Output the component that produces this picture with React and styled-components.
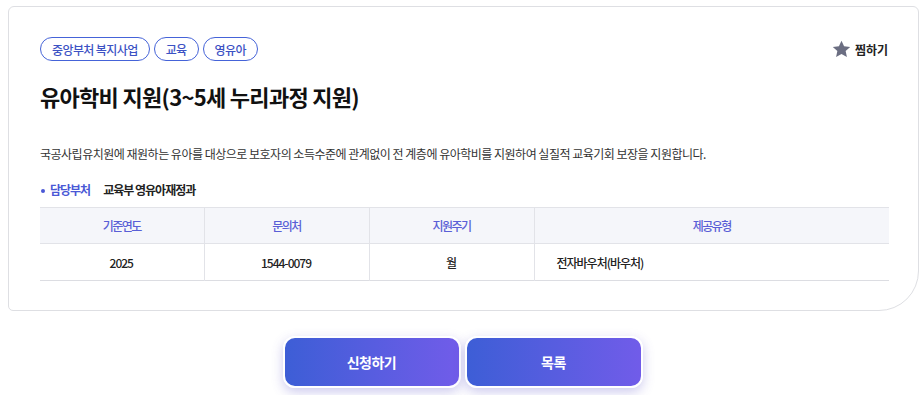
import React from 'react'
import styled, { createGlobalStyle } from 'styled-components'

const GlobalStyle = createGlobalStyle`
  * { box-sizing: border-box; }
  body {
    margin: 0;
    background: #fff;
    font-family: "Noto Sans CJK KR", "Noto Sans", sans-serif;
    color: #222;
  }
`

const tags = ['중앙부처 복지사업', '교육', '영유아']

const columns = [
  { head: '기준연도', value: '2025', width: '164px' },
  { head: '문의처', value: '1544-0079', width: '165px' },
  { head: '지원주기', value: '월', width: '165px' },
  { head: '제공유형', value: '전자바우처(바우처)', width: 'auto', left: true },
]

const StarIcon = () => (
  <svg width="19" height="18" viewBox="0 0 24 23">
    <path
      d="M12 0.8l3.3 7.1 7.8 0.9-5.8 5.3 1.6 7.7L12 17.9l-6.9 3.9 1.6-7.7L0.9 8.8l7.8-0.9z"
      fill="#6b6e82"
    />
  </svg>
)

const App = () => {
  return (
    <Page>
      <GlobalStyle />
      <Card>
        <TopRow>
          <Tags>
            {tags.map((t) => (
              <Tag key={t}>{t}</Tag>
            ))}
          </Tags>
          <Wish>
            <StarIcon />
            <span>찜하기</span>
          </Wish>
        </TopRow>
        <Title>유아학비 지원(3~5세 누리과정 지원)</Title>
        <Desc>
          국공사립유치원에 재원하는 유아를 대상으로 보호자의 소득수준에 관계없이 전 계층에 유아학비를 지원하여 실질적 교육기회 보장을 지원합니다.
        </Desc>
        <Dept>
          <DeptLabel>담당부처</DeptLabel>
          <DeptName>교육부 영유아재정과</DeptName>
        </Dept>
        <Table>
          <colgroup>
            {columns.map((c) => (
              <col key={c.head} style={{ width: c.width }} />
            ))}
          </colgroup>
          <thead>
            <tr>
              {columns.map((c) => (
                <Th key={c.head}>{c.head}</Th>
              ))}
            </tr>
          </thead>
          <tbody>
            <tr>
              {columns.map((c) => (
                <Td key={c.head} $left={c.left}>{c.value}</Td>
              ))}
            </tr>
          </tbody>
        </Table>
      </Card>
      <Buttons>
        <ActionButton>신청하기</ActionButton>
        <ActionButton>목록</ActionButton>
      </Buttons>
    </Page>
  )
}

export default App

const Page = styled.div`
  width: 924px;
  height: 395px;
  padding: 6px 5px 0 8px;
  overflow: hidden;
`

const Card = styled.div`
  border: 1px solid #dedfe3;
  border-radius: 6px 6px 40px 5px;
  padding: 30px 29px 30px 31px;
  height: 305px;
`

const TopRow = styled.div`
  display: flex;
  justify-content: space-between;
  align-items: center;
`

const Tags = styled.div`
  display: flex;
  gap: 4px;
`

const Tag = styled.span`
  height: 24px;
  padding: 0 11px;
  border: 1px solid #4563d8;
  border-radius: 12px;
  color: #3c52c4;
  font-size: 12px;
  font-weight: 500;
  letter-spacing: -0.6px;
  display: flex;
  align-items: center;
`

const Wish = styled.div`
  display: flex;
  align-items: center;
  gap: 4px;
  margin-right: 1px;
  font-size: 12px;
  font-weight: 700;
  color: #222;
`

const Title = styled.h1`
  margin: 19px 0 0;
  font-size: 22px;
  font-weight: 700;
  line-height: 32px;
  color: #111;
  letter-spacing: -0.7px;
`

const Desc = styled.p`
  margin: 32px 0 0;
  font-size: 12px;
  line-height: 20px;
  color: #333;
  letter-spacing: -0.5px;
`

const Dept = styled.div`
  margin-top: 16px;
  display: flex;
  align-items: center;
  gap: 13px;
  font-size: 12px;
  font-weight: 700;
  line-height: 20px;
`

const DeptLabel = styled.span`
  position: relative;
  padding-left: 10px;
  color: #4a58d6;
  letter-spacing: -1px;
  &::before {
    content: '';
    position: absolute;
    left: 1px;
    top: 9px;
    width: 4px;
    height: 4px;
    border-radius: 50%;
    background: #4a58d6;
  }
`

const DeptName = styled.span`
  color: #222;
  letter-spacing: -1px;
`

const Table = styled.table`
  margin-top: 7px;
  width: 100%;
  border-collapse: collapse;
  table-layout: fixed;
  border-top: 1px solid #e2e3e8;
  border-bottom: 1px solid #dcdde2;
  font-size: 12px;
`

const Th = styled.th`
  height: 36px;
  background: #f5f6fa;
  color: #5a5fd6;
  font-weight: 500;
  letter-spacing: -1.5px;
  border-left: 1px solid #e2e3e8;
  border-bottom: 1px solid #e2e3e8;
  &:first-child { border-left: none; }
`

const Td = styled.td`
  height: 37px;
  text-align: ${(p) => (p.$left ? 'left' : 'center')};
  padding-left: ${(p) => (p.$left ? '22px' : '0')};
  font-weight: 500;
  color: #222;
  letter-spacing: -1px;
  border-left: 1px solid #e2e3e8;
  &:first-child { border-left: none; }
`

const Buttons = styled.div`
  margin-top: 25px;
  display: flex;
  justify-content: center;
  gap: 4px;
  padding-right: 2px;
`

const ActionButton = styled.button`
  width: 178px;
  height: 52px;
  border: 2px solid #fff;
  border-radius: 12px;
  background: linear-gradient(90deg, #3d5ed6 0%, #715ce9 100%);
  box-shadow: 0 4px 12px rgba(90, 80, 200, 0.3);
  color: #fff;
  font-family: inherit;
  font-size: 14px;
  font-weight: 700;
  letter-spacing: -0.5px;
`
